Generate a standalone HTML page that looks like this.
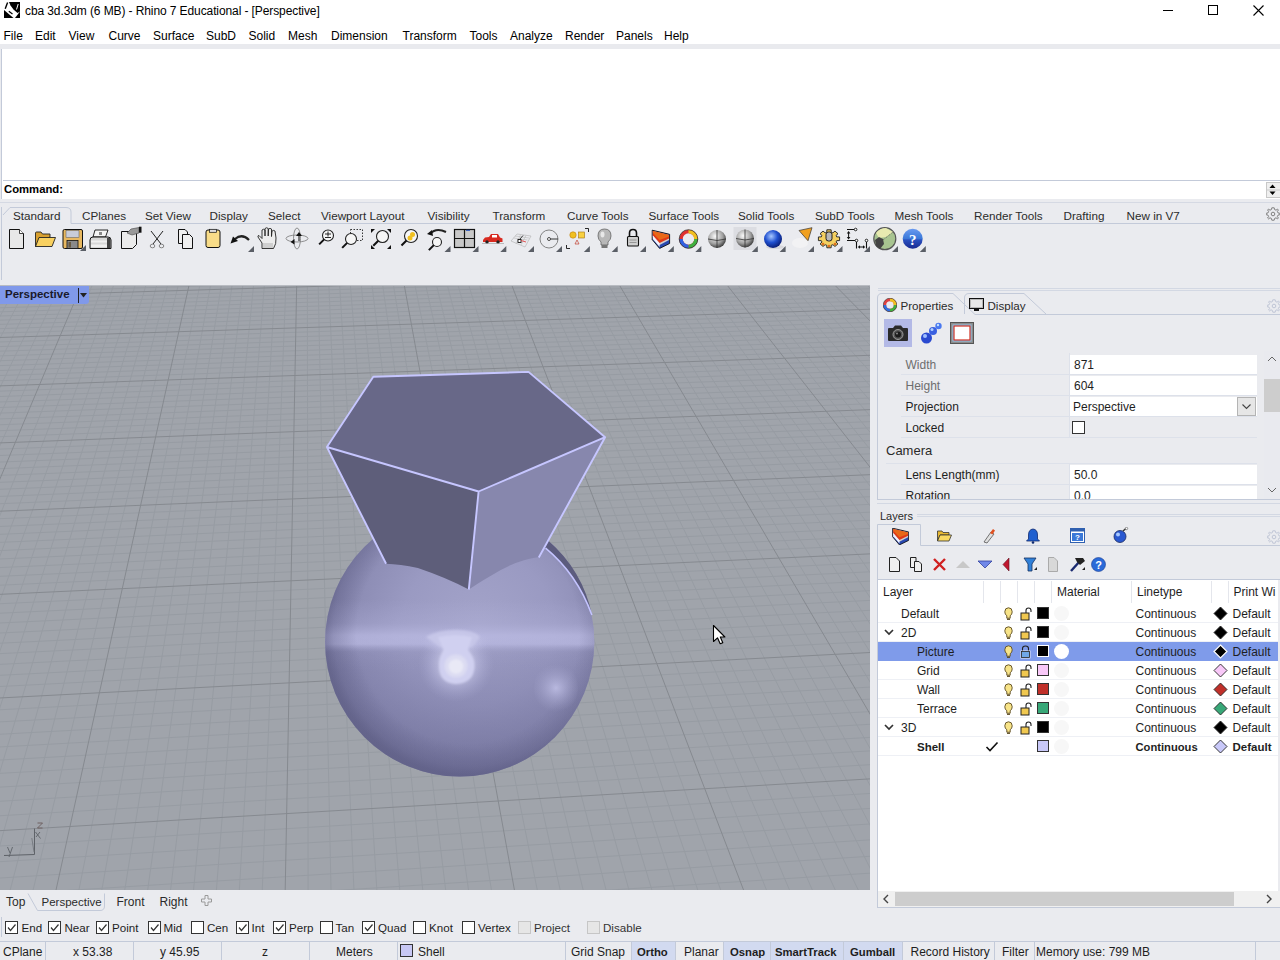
<!DOCTYPE html>
<html><head><meta charset="utf-8"><style>
html,body{margin:0;padding:0;}
body{width:1280px;height:960px;overflow:hidden;position:relative;background:#eaebef;font-family:"Liberation Sans",sans-serif;}
.abs{position:absolute;}
.t{position:absolute;white-space:nowrap;line-height:14px;font-size:12px;}
svg{display:block;}
</style></head><body>
<div class="abs" style="left:0;top:0;width:1280px;height:44px;background:#ffffff"></div><svg class="abs" style="left:4px;top:2px" width="16" height="16" viewBox="0 0 16 16">
<path d="M5 0 L16 0 L16 9.5 L13.5 11 L9.5 7.5 L6.5 3.5 Z" fill="#000"/>
<path d="M0 8 L9.5 16 L0 16 Z" fill="#000"/>
<path d="M16 9.5 L16 16 L11 16 Z" fill="#000"/>
<path d="M3.6 0.5 L1.2 6.8" stroke="#000" stroke-width="1.4"/>
<path d="M14.2 2 L12.5 7.5" stroke="#fff" stroke-width="1"/>
<path d="M4.8 9.3 L8.5 12" stroke="#000" stroke-width="1.2"/>
</svg><div class="t" style="left:25px;top:4px;font-size:12px;color:#000;letter-spacing:-0.1px">cba 3d.3dm (6 MB) - Rhino 7 Educational - [Perspective]</div><div class="abs" style="left:1163px;top:10px;width:10px;height:1px;background:#000"></div><div class="abs" style="left:1208px;top:5px;width:8px;height:8px;border:1px solid #000"></div><svg class="abs" style="left:1253px;top:5px" width="11" height="11" viewBox="0 0 11 11"><path d="M0.5 0.5L10.5 10.5M10.5 0.5L0.5 10.5" stroke="#000" stroke-width="1.1"/></svg><div class="t" style="left:3.5px;top:29px;font-size:12px;color:#000;">File</div><div class="t" style="left:35px;top:29px;font-size:12px;color:#000;">Edit</div><div class="t" style="left:68.5px;top:29px;font-size:12px;color:#000;">View</div><div class="t" style="left:108.5px;top:29px;font-size:12px;color:#000;">Curve</div><div class="t" style="left:153px;top:29px;font-size:12px;color:#000;">Surface</div><div class="t" style="left:206px;top:29px;font-size:12px;color:#000;">SubD</div><div class="t" style="left:248.5px;top:29px;font-size:12px;color:#000;">Solid</div><div class="t" style="left:288px;top:29px;font-size:12px;color:#000;">Mesh</div><div class="t" style="left:331px;top:29px;font-size:12px;color:#000;">Dimension</div><div class="t" style="left:402.5px;top:29px;font-size:12px;color:#000;">Transform</div><div class="t" style="left:469.5px;top:29px;font-size:12px;color:#000;">Tools</div><div class="t" style="left:510px;top:29px;font-size:12px;color:#000;">Analyze</div><div class="t" style="left:565px;top:29px;font-size:12px;color:#000;">Render</div><div class="t" style="left:616px;top:29px;font-size:12px;color:#000;">Panels</div><div class="t" style="left:664px;top:29px;font-size:12px;color:#000;">Help</div><div class="abs" style="left:0;top:44px;width:1280px;height:5px;background:#e9eaee"></div><div class="abs" style="left:1px;top:49px;width:1279px;height:150px;background:#fff;border-left:1px solid #c3cad9"></div><div class="abs" style="left:3px;top:180px;width:1277px;height:1px;background:#c3cad9"></div><div class="t" style="left:4px;top:181.5px;font-size:12px;font-weight:bold;color:#000;font-size:11.3px">Command:</div><svg class="abs" style="left:1266px;top:182px" width="14" height="16" viewBox="0 0 14 16">
<rect x="0" y="0" width="14" height="16" fill="#c8c8c8"/>
<rect x="1" y="1" width="13" height="6.5" fill="#efefef"/>
<rect x="1" y="8.5" width="13" height="6.5" fill="#efefef"/>
<path d="M3.5 6L6.5 2.5L9.5 6Z" fill="#000"/>
<path d="M3.5 9.5L6.5 13L9.5 9.5Z" fill="#000"/>
</svg><div class="abs" style="left:0;top:199px;width:1280px;height:87px;background:#eaebef"></div><div class="abs" style="left:0;top:202px;width:1280px;height:1px;background:#d5d9e3"></div><div class="abs" style="left:1px;top:207px;width:1px;height:73px;background:#c3cad9"></div><svg class="abs" style="left:0;top:205px" width="1280" height="20" viewBox="0 0 1280 20">
<path d="M3 10 L10 2.5 L66 2.5 Q71 2.5 71 7 L71 18.5 L1280 18.5" stroke="#c3cad9" fill="none" stroke-width="1"/>
</svg><div class="t" style="left:13px;top:209px;font-size:12px;color:#2b2b2b;font-size:11.7px">Standard</div><div class="t" style="left:82px;top:209px;font-size:12px;color:#2b2b2b;font-size:11.7px">CPlanes</div><div class="t" style="left:145px;top:209px;font-size:12px;color:#2b2b2b;font-size:11.7px">Set View</div><div class="t" style="left:209.5px;top:209px;font-size:12px;color:#2b2b2b;font-size:11.7px">Display</div><div class="t" style="left:268px;top:209px;font-size:12px;color:#2b2b2b;font-size:11.7px">Select</div><div class="t" style="left:321px;top:209px;font-size:12px;color:#2b2b2b;font-size:11.7px">Viewport Layout</div><div class="t" style="left:427.5px;top:209px;font-size:12px;color:#2b2b2b;font-size:11.7px">Visibility</div><div class="t" style="left:492.5px;top:209px;font-size:12px;color:#2b2b2b;font-size:11.7px">Transform</div><div class="t" style="left:567px;top:209px;font-size:12px;color:#2b2b2b;font-size:11.7px">Curve Tools</div><div class="t" style="left:648.5px;top:209px;font-size:12px;color:#2b2b2b;font-size:11.7px">Surface Tools</div><div class="t" style="left:738px;top:209px;font-size:12px;color:#2b2b2b;font-size:11.7px">Solid Tools</div><div class="t" style="left:815px;top:209px;font-size:12px;color:#2b2b2b;font-size:11.7px">SubD Tools</div><div class="t" style="left:894.5px;top:209px;font-size:12px;color:#2b2b2b;font-size:11.7px">Mesh Tools</div><div class="t" style="left:974px;top:209px;font-size:12px;color:#2b2b2b;font-size:11.7px">Render Tools</div><div class="t" style="left:1063.5px;top:209px;font-size:12px;color:#2b2b2b;font-size:11.7px">Drafting</div><div class="t" style="left:1126.5px;top:209px;font-size:12px;color:#2b2b2b;font-size:11.7px">New in V7</div><svg class="abs" style="left:1266px;top:207px" width="14" height="14" viewBox="0 0 14 14">
<path d="M7 0.8 L8.2 0.8 L8.6 2.6 L10 3.2 L11.5 2.1 L12.4 3 L11.4 4.5 L12 5.9 L13.8 6.3 L13.8 7.7 L12 8.1 L11.4 9.5 L12.4 11 L11.5 11.9 L10 10.8 L8.6 11.4 L8.2 13.2 L5.8 13.2 L5.4 11.4 L4 10.8 L2.5 11.9 L1.6 11 L2.6 9.5 L2 8.1 L0.2 7.7 L0.2 6.3 L2 5.9 L2.6 4.5 L1.6 3 L2.5 2.1 L4 3.2 L5.4 2.6 L5.8 0.8Z" fill="none" stroke="#808080" stroke-width="1"/>
<circle cx="7" cy="7" r="1.8" fill="none" stroke="#808080" stroke-width="1"/>
</svg><svg class="abs" style="left:0;top:224px" width="935" height="32" viewBox="0 224 935 32"><path d="M9.5 229.5 L19.5 229.5 L23.5 233.5 L23.5 248.5 L9.5 248.5Z" fill="#e8e8e8" stroke="#111" stroke-width="1"/><path d="M19.5 229.5 L19.5 233.5 L23.5 233.5" fill="#fff" stroke="#111" stroke-width="0.8"/><path d="M35.5 246.5 L35.5 233 Q35.5 232 36.5 232 L41 232 L42.5 234 L50 234 L50 237 Z" fill="#d8a030" stroke="#222" stroke-width="0.9"/><path d="M35.5 246.5 L39 237.5 L55.5 237.5 L52 246.5Z" fill="#f8d060" stroke="#222" stroke-width="0.9"/><rect x="63" y="229.5" width="19.5" height="19" rx="1.5" fill="#e8b860" stroke="#111" stroke-width="1"/><rect x="66" y="230.5" width="13" height="7" fill="#c8ccd8" stroke="#555" stroke-width="0.5"/><rect x="67" y="240.5" width="11" height="8" fill="#8a8a8a" stroke="#111" stroke-width="0.8"/><rect x="68.5" y="242" width="2.5" height="5.5" fill="#6a5a40"/><path d="M80 251 L86 245 L86 251Z" fill="#5a5e66"/><path d="M93 237 L95 230 L108 230 L105.5 237Z" fill="#f4f4f4" stroke="#111" stroke-width="0.9"/><rect x="99" y="232" width="3" height="3" fill="#888"/><path d="M90 240 Q90 237 93 237 L108 237 Q111 237 111 240 L111 248.5 L90 248.5Z" fill="#d8d8d8" stroke="#111" stroke-width="1"/><rect x="91" y="240.5" width="16" height="2" fill="#f0f0f0"/><rect x="91" y="244.5" width="16" height="2.5" fill="#f0f0f0"/><rect x="107" y="238" width="3.5" height="10" fill="#444"/><path d="M121.5 231.5 L136.5 231.5 L136.5 244.5 L132.5 248.5 L121.5 248.5Z" fill="#ebebeb" stroke="#111" stroke-width="1"/><path d="M127 233 L131 229 L139 227.5 L139 233 L132 235Z" fill="#999" stroke="#444" stroke-width="0.6"/><rect x="139" y="226.7" width="2.5" height="6" fill="#111"/><path d="M151 231 L161 244 M163 231 L153 244" stroke="#222" stroke-width="1"/><ellipse cx="152.5" cy="246" rx="2.3" ry="1.8" fill="none" stroke="#777" stroke-width="0.9"/><ellipse cx="161.5" cy="246" rx="2.3" ry="1.8" fill="none" stroke="#777" stroke-width="0.9"/><path d="M178.5 229.5 L185 229.5 L187.5 232 L187.5 243.5 L178.5 243.5Z" fill="#f0f0f0" stroke="#111" stroke-width="1"/><path d="M182.5 234.5 L189.5 234.5 L192.5 237.5 L192.5 248.5 L182.5 248.5Z" fill="#f0f0f0" stroke="#111" stroke-width="1"/><rect x="206" y="230" width="14" height="17.5" rx="2" fill="#f8dc88" stroke="#111" stroke-width="1"/><rect x="209.5" y="229.3" width="7" height="3" fill="#ddd" stroke="#111" stroke-width="0.7"/><path d="M235 239 Q242 233 249 240" stroke="#222" stroke-width="2.2" fill="none"/><path d="M230.5 243.5 L233 236.5 L238 241Z" fill="#111"/><path d="M248 252 L254 246 L254 252Z" fill="#5a5e66"/><path d="M262 248.5 L262 243 L258 237 Q257.5 235.5 259 235.5 L262 238.5 L262 230 Q263.5 228.5 265 230 L265 236 L265 228.5 Q266.7 227 268.2 228.5 L268.2 236 L268.5 229 Q270 227.8 271.5 229 L271.5 236.5 L272 231 Q273.5 229.8 275 231 L276 238 Q276.5 244 273.5 248.5Z" fill="#ececec" stroke="#222" stroke-width="0.9"/><rect x="263" y="243" width="10" height="5" fill="#cfcfcf"/><ellipse cx="297" cy="238.5" rx="11" ry="3.5" fill="none" stroke="#777" stroke-width="0.8"/><ellipse cx="297" cy="238.5" rx="3.5" ry="10.5" fill="none" stroke="#777" stroke-width="0.8"/><path d="M299 232 L302 236 L296 236Z M294.5 239 L294.5 244.5 L290.5 242Z" fill="#111"/><path d="M299 236 L299 241" stroke="#111"/><circle cx="328" cy="235.5" r="5.5" fill="#f6f6f6" stroke="#222" stroke-width="1.1"/><path d="M324.15 239.35 L319.15 244.35" stroke="#111" stroke-width="2"/><path d="M325 234 L331 234 M328 231.5 L328 236.5 M325 237.5 L331 237.5" stroke="#111" stroke-width="0.9"/><rect x="350.5" y="229.5" width="12" height="11" fill="none" stroke="#222" stroke-width="0.9" stroke-dasharray="1.5 1.5"/><circle cx="351" cy="239" r="5.5" fill="#f6f6f6" stroke="#222" stroke-width="1.1"/><path d="M347.15 242.85 L342.15 247.85" stroke="#111" stroke-width="2"/><path d="M371 229 L375 229 L371 233Z M391 229 L387 229 L391 233Z M371 249 L375 249 L371 245Z M391 249 L387 249 L391 245Z" fill="#111"/><circle cx="382.5" cy="236.5" r="6" fill="#f6f6f6" stroke="#222" stroke-width="1.1"/><path d="M378.3 240.7 L373.3 245.7" stroke="#111" stroke-width="2"/><circle cx="411" cy="236" r="6.5" fill="#f6f6f6" stroke="#222" stroke-width="1.1"/><path d="M406.45 240.55 L401.45 245.55" stroke="#111" stroke-width="2"/><circle cx="410" cy="238" r="2.5" fill="#f0c020"/><circle cx="412.5" cy="234.5" r="2.5" fill="#f0c020"/><path d="M430 234 Q436 227 446 232" stroke="#222" stroke-width="2" fill="none"/><path d="M427 234 L432 230 L433 236Z" fill="#111"/><circle cx="437" cy="242" r="4.5" fill="#f6f6f6" stroke="#222" stroke-width="1.1"/><path d="M433.85 245.15 L428.85 250.15" stroke="#111" stroke-width="2"/><path d="M444.5 252 L450.5 246 L450.5 252Z" fill="#5a5e66"/><rect x="454.5" y="229.5" width="20" height="18" fill="#c8c8c8" stroke="#111" stroke-width="1.2"/><path d="M464.5 229.5 L464.5 247.5 M454.5 238.5 L474.5 238.5" stroke="#111" stroke-width="1.2"/><path d="M466 230.3 L470 230.3" stroke="#2050c0"/><path d="M472.5 252 L478.5 246 L478.5 252Z" fill="#5a5e66"/><path d="M483 240 L485 237.5 L489 237 L491 234 L498 234 L500 237.5 L502.5 238.5 L502.5 242 L483 242Z" fill="#d82a20"/><rect x="492" y="235" width="5" height="2.5" fill="#fff"/><circle cx="487" cy="242" r="1.7" fill="#222"/><circle cx="498" cy="242" r="1.7" fill="#222"/><path d="M482 243.5 L504 243.5" stroke="#999" stroke-width="0.6"/><path d="M500.3 252 L506.3 246 L506.3 252Z" fill="#5a5e66"/><path d="M511 241 L517 234 L531 236 L525 247Z" fill="none" stroke="#b0b0b0" stroke-width="0.6"/><path d="M513.5 238 L527.5 240 M515 236 L529 238 M516 244 L520.5 235 M521 245 L526 235.5" stroke="#b8b8b8" stroke-width="0.6"/><rect x="518" y="239.5" width="3" height="3" fill="#fff" stroke="#111" stroke-width="0.9"/><path d="M521 240.5 L526 242" stroke="#e03030" stroke-width="0.8"/><path d="M520 239 L523 235.5" stroke="#111" stroke-width="0.8"/><path d="M528 252 L534 246 L534 252Z" fill="#5a5e66"/><circle cx="549" cy="239" r="9" fill="none" stroke="#777" stroke-width="0.9"/><circle cx="549" cy="239" r="1.5" fill="#fff" stroke="#222" stroke-width="0.8"/><path d="M550.5 239 L558 239" stroke="#222" stroke-width="0.9"/><path d="M556 252 L562 246 L562 252Z" fill="#5a5e66"/><circle cx="573" cy="235" r="3.2" fill="#f0c020" stroke="#c08010" stroke-width="0.6"/><rect x="578.5" y="232" width="6" height="6" fill="#f8d040" stroke="#a07010" stroke-width="0.6"/><path d="M575 244 L577 240 L579 244Z" fill="none" stroke="#c04030" stroke-width="0.7"/><path d="M566.5 245 L566.5 248.5 L570 248.5 M585 228.5 L588.5 228.5 L588.5 232" stroke="#111" stroke-width="0.9" fill="none"/><path d="M583.9 252 L589.9 246 L589.9 252Z" fill="#5a5e66"/><path d="M604.5 229 Q598 229 598 236 Q598 239.5 601 242 L601 245 L608 245 L608 242 Q611 239.5 611 236 Q611 229 604.5 229Z" fill="#b8b8b8" stroke="#555" stroke-width="0.7"/><ellipse cx="602.5" cy="234.5" rx="2" ry="3" fill="#e8e8e8"/><rect x="601.5" y="245" width="6" height="3" fill="#777"/><path d="M611.7 252 L617.7 246 L617.7 252Z" fill="#5a5e66"/><path d="M629.5 237 L629.5 233 Q629.5 229.5 633 229.5 Q636.5 229.5 636.5 233 L636.5 237" stroke="#111" stroke-width="1.6" fill="none"/><rect x="627.5" y="236.5" width="11" height="9.5" rx="1" fill="#cfcfcf" stroke="#111" stroke-width="1.1"/><path d="M629.5 240 L636.5 240 M629.5 242.5 L636.5 242.5" stroke="#888" stroke-width="0.8"/><path d="M640 252 L646 246 L646 252Z" fill="#5a5e66"/><path d="M652.2 230.2 L669.6 234.3 L669.6 243.5 L659.6 248.4 L652.2 239.6Z" fill="#2848b0" stroke="#111" stroke-width="0.9"/><path d="M652.8 231 L669 235 L669 240 L659.6 245 L652.8 237Z" fill="#d0d0d0"/><path d="M652.8 231 L669 235 L669 238.5 L659.6 243 L652.8 235.5Z" fill="#e03818"/><path d="M652.8 231 L669 235 L669 236.5 L659.6 240 L653 233Z" fill="#e86818"/><path d="M652.8 235.5 L659.6 243.5 L659.6 247 L652.8 239Z" fill="#f4f4ff"/><path d="M667.8 252 L673.8 246 L673.8 252Z" fill="#5a5e66"/><circle cx="688.5" cy="239" r="7.5" fill="none" stroke="#e03030" stroke-width="3.5"/><path d="M688.5 231.5 A7.5 7.5 0 0 1 696 239" stroke="#f0c020" stroke-width="3.5" fill="none"/><path d="M696 239 A7.5 7.5 0 0 1 688.5 246.5" stroke="#40b040" stroke-width="3.5" fill="none"/><path d="M688.5 246.5 A7.5 7.5 0 0 1 681 239" stroke="#3060e0" stroke-width="3.5" fill="none"/><circle cx="688.5" cy="239" r="9.3" fill="none" stroke="#222" stroke-width="0.7"/><path d="M695.3 252 L701.3 246 L701.3 252Z" fill="#5a5e66"/><defs><radialGradient id="gs" cx="0.4" cy="0.35" r="0.7"><stop offset="0" stop-color="#fafafa"/><stop offset="0.6" stop-color="#a0a0a0"/><stop offset="1" stop-color="#303030"/></radialGradient><radialGradient id="bs" cx="0.4" cy="0.35" r="0.7"><stop offset="0" stop-color="#a8c8ff"/><stop offset="0.5" stop-color="#2050d0"/><stop offset="1" stop-color="#08186a"/></radialGradient><radialGradient id="gh" cx="0.45" cy="0.4" r="0.6"><stop offset="0" stop-color="#e0e8c0"/><stop offset="0.7" stop-color="#90a070"/><stop offset="1" stop-color="#404040"/></radialGradient></defs><circle cx="717" cy="239" r="9" fill="url(#gs)"/><path d="M717 230 L717 248 M708 239 Q717 242 726 239" stroke="#333" stroke-width="0.8" fill="none"/><rect x="733.5" y="227" width="23" height="23" fill="#dcdde2"/><circle cx="745" cy="238.5" r="9" fill="url(#gs)"/><path d="M745 229.5 L745 247.5 M736 238.5 Q745 241.5 754 238.5" stroke="#333" stroke-width="0.8" fill="none"/><path d="M751.8 252 L757.8 246 L757.8 252Z" fill="#5a5e66"/><ellipse cx="775" cy="247" rx="9" ry="2" fill="#d8d8dc"/><circle cx="773" cy="239" r="9" fill="url(#bs)"/><path d="M779.6 252 L785.6 246 L785.6 252Z" fill="#5a5e66"/><ellipse cx="800" cy="243" rx="8" ry="5" fill="#f2f2f4"/><path d="M799 230.5 L812 227.7 L808 240.7Z" fill="#f0a020" stroke="#333" stroke-width="0.7"/><path d="M808 252 L814 246 L814 252Z" fill="#5a5e66"/><g transform="translate(0 35.8) scale(1 0.85)"><path d="M836.69 236.59 L839.58 236.65 L839.58 240.95 L836.69 241.01 L836.00 242.67 L838.00 244.77 L834.97 247.80 L832.87 245.80 L831.21 246.49 L831.15 249.38 L826.85 249.38 L826.79 246.49 L825.13 245.80 L823.03 247.80 L820.00 244.77 L822.00 242.67 L821.31 241.01 L818.42 240.95 L818.42 236.65 L821.31 236.59 L822.00 234.93 L820.00 232.83 L823.03 229.80 L825.13 231.80 L826.79 231.11 L826.85 228.22 L831.15 228.22 L831.21 231.11 L832.87 231.80 L834.97 229.80 L838.00 232.83 L836.00 234.93Z" fill="#f4d060" stroke="#222" stroke-width="1"/></g><circle cx="823" cy="244" r="1.3" fill="#e07020"/><circle cx="835" cy="244" r="1.3" fill="#e07020"/><circle cx="829" cy="246" r="1.3" fill="#e07020"/><rect x="826" y="232" width="6" height="9" rx="2.5" fill="#b8b8b8" stroke="#111" stroke-width="0.9"/><path d="M836.5 252 L842.5 246 L842.5 252Z" fill="#5a5e66"/><path d="M847 229.5 L854.3 229.5 M847 240.5 L855.2 240.5 M856.5 242 L856.5 248.5 M866.5 242 L866.5 248.5" stroke="#111" stroke-width="1.1" fill="none"/><circle cx="855.6" cy="229.5" r="1.3" fill="#fff" stroke="#111" stroke-width="0.9"/><circle cx="856.5" cy="240.5" r="1.3" fill="#fff" stroke="#111" stroke-width="0.9"/><circle cx="866.5" cy="240.5" r="1.3" fill="#fff" stroke="#111" stroke-width="0.9"/><path d="M848.6 232.5 L848.6 238" stroke="#111" stroke-width="1"/><path d="M846.8 233.5 L848.6 231 L850.4 233.5Z M846.8 237 L848.6 239.5 L850.4 237Z" fill="#111"/><path d="M859.5 247 L863.5 247" stroke="#111" stroke-width="1"/><path d="M860 245.3 L857.8 247 L860 248.7Z M863 245.3 L865.2 247 L863 248.7Z" fill="#111"/><path d="M864 252 L870 246 L870 252Z" fill="#5a5e66"/><circle cx="884.8" cy="238.7" r="11" fill="#a8c490" stroke="#555" stroke-width="1.2"/><path d="M876 233 Q880 228 886 228 L893 232 L886 237 L879 238Z" fill="#e8eab0"/><path d="M875 240 L879 237 L883 239 L884 244 L880 249 L876 246Z" fill="#444"/><path d="M883 240 L893 232" stroke="#555" stroke-width="0.8" stroke-dasharray="1 1"/><path d="M892 252 L898 246 L898 252Z" fill="#5a5e66"/><defs><linearGradient id="hp" x1="0" y1="0" x2="0" y2="1"><stop offset="0" stop-color="#6a9af0"/><stop offset="0.5" stop-color="#3a78d8"/><stop offset="0.56" stop-color="#2a50c0"/><stop offset="1" stop-color="#1a2a90"/></linearGradient></defs><circle cx="912.7" cy="238.7" r="10" fill="url(#hp)"/><text x="912.7" y="244.5" font-size="15" font-weight="bold" fill="#fff" text-anchor="middle" font-family="Liberation Serif">?</text><path d="M919.8 252 L925.8 246 L925.8 252Z" fill="#5a5e66"/></svg><div class="abs" style="left:0;top:285px;width:870px;height:1px;background:#b9bcc2"></div><svg class="abs" style="left:0;top:286px" width="870" height="604" viewBox="0 0 870 604">
<rect width="870" height="604" fill="#a0a4ab"/>
<path d="M-79.0 -55.6L-961.5 1043.9M-69.1 -55.8L-927.6 1041.1M-59.3 -56.1L-893.8 1038.3M-49.4 -56.4L-860.1 1035.5M-39.6 -56.6L-826.5 1032.7M-29.8 -56.9L-793.0 1030.0M-20.0 -57.1L-759.7 1027.2M-10.2 -57.4L-726.4 1024.5M-0.4 -57.7L-693.3 1021.7M19.1 -58.2L-627.4 1016.3M28.9 -58.4L-594.7 1013.6M38.6 -58.7L-562.0 1010.9M48.4 -59.0L-529.5 1008.2M58.1 -59.2L-497.0 1005.5M67.8 -59.5L-464.7 1002.9M77.5 -59.7L-432.5 1000.2M87.2 -60.0L-400.4 997.5M96.9 -60.2L-368.4 994.9M116.2 -60.8L-304.8 989.7M125.9 -61.0L-273.1 987.0M135.5 -61.3L-241.6 984.4M145.1 -61.5L-210.1 981.8M154.8 -61.8L-178.8 979.3M164.4 -62.0L-147.6 976.7M174.0 -62.3L-116.4 974.1M183.6 -62.5L-85.4 971.5M193.1 -62.8L-54.5 969.0M212.3 -63.3L7.0 963.9M221.8 -63.5L37.6 961.4M231.4 -63.8L68.1 958.9M240.9 -64.1L98.5 956.4M250.4 -64.3L128.8 953.9M259.9 -64.6L159.0 951.4M269.4 -64.8L189.1 948.9M278.9 -65.1L219.1 946.4M288.4 -65.3L249.0 943.9M307.3 -65.8L308.5 939.0M316.8 -66.1L338.1 936.6M326.2 -66.3L367.6 934.2M335.6 -66.6L397.0 931.7M345.0 -66.8L426.3 929.3M354.5 -67.1L455.6 926.9M363.9 -67.3L484.7 924.5M373.2 -67.6L513.7 922.1M382.6 -67.8L542.6 919.7M401.3 -68.3L600.2 915.0M410.7 -68.5L628.8 912.6M420.0 -68.8L657.4 910.2M429.4 -69.0L685.9 907.9M438.7 -69.3L714.2 905.5M448.0 -69.5L742.5 903.2M457.3 -69.8L770.7 900.9M466.6 -70.0L798.8 898.6M475.9 -70.3L826.8 896.3M494.4 -70.8L882.5 891.7M503.7 -71.0L910.3 889.4M512.9 -71.3L937.9 887.1M522.1 -71.5L965.5 884.8M531.4 -71.7L993.0 882.5M540.6 -72.0L1020.3 880.3M549.8 -72.2L1047.6 878.0M559.0 -72.5L1074.8 875.8M568.2 -72.7L1102.0 873.5M586.5 -73.2L1156.0 869.1M595.7 -73.4L1182.8 866.9M604.8 -73.7L1209.6 864.7M613.9 -73.9L1236.3 862.5M623.1 -74.2L1262.9 860.3M632.2 -74.4L1289.5 858.1M641.3 -74.6L1315.9 855.9M650.4 -74.9L1342.3 853.7M659.5 -75.1L1368.6 851.5M677.6 -75.6L1420.9 847.2M686.7 -75.9L1447.0 845.1M695.7 -76.1L1472.9 842.9M704.8 -76.3L1498.8 840.8M713.8 -76.6L1524.6 838.7M722.9 -76.8L1550.3 836.5M731.9 -77.0L1576.0 834.4M740.9 -77.3L1601.5 832.3M749.9 -77.5L1627.0 830.2M767.8 -78.0L1677.8 826.0M776.8 -78.2L1703.0 823.9M785.8 -78.5L1728.2 821.9M794.7 -78.7L1753.3 819.8M803.7 -78.9L1778.3 817.7M812.6 -79.2L1803.3 815.7M821.5 -79.4L1828.1 813.6M830.4 -79.7L1852.9 811.6M839.3 -79.9L1877.7 809.5M857.1 -80.4L1926.9 805.5M866.0 -80.6L1951.4 803.4M874.9 -80.8L1975.8 801.4M883.7 -81.1L2000.2 799.4M892.6 -81.3L2024.4 797.4M901.4 -81.5L2048.7 795.4M910.2 -81.8L2072.8 793.4M919.1 -82.0L2096.9 791.4M927.9 -82.2L2120.8 789.4M-91.4 -52.3L940.5 -79.7M-93.9 -49.2L944.3 -77.0M-96.5 -46.0L948.2 -74.2M-99.1 -42.8L952.1 -71.4M-101.8 -39.6L956.1 -68.5M-104.5 -36.3L960.1 -65.6M-107.2 -33.0L964.2 -62.7M-109.9 -29.7L968.3 -59.7M-112.7 -26.3L972.5 -56.7M-118.5 -19.3L981.0 -50.6M-121.4 -15.8L985.3 -47.4M-124.3 -12.2L989.7 -44.3M-127.3 -8.6L994.2 -41.1M-130.3 -4.9L998.7 -37.8M-133.4 -1.2L1003.3 -34.5M-136.5 2.6L1007.9 -31.2M-139.7 6.5L1012.6 -27.8M-142.9 10.4L1017.4 -24.4M-149.5 18.4L1027.1 -17.4M-152.8 22.5L1032.0 -13.8M-156.3 26.6L1037.1 -10.2M-159.7 30.8L1042.2 -6.5M-163.2 35.1L1047.3 -2.8M-166.8 39.4L1052.6 1.0M-170.4 43.8L1057.9 4.8M-174.1 48.2L1063.3 8.7M-177.8 52.8L1068.7 12.6M-185.4 62.0L1079.9 20.7M-189.3 66.8L1085.6 24.8M-193.3 71.6L1091.4 28.9M-197.3 76.5L1097.3 33.2M-201.4 81.5L1103.3 37.5M-205.6 86.6L1109.3 41.9M-209.8 91.7L1115.5 46.3M-214.1 96.9L1121.7 50.8M-218.5 102.3L1128.1 55.4M-227.5 113.2L1141.1 64.7M-232.1 118.8L1147.7 69.5M-236.8 124.5L1154.5 74.4M-241.5 130.3L1161.4 79.3M-246.4 136.1L1168.4 84.4M-251.3 142.2L1175.5 89.5M-256.4 148.3L1182.7 94.7M-261.5 154.5L1190.0 100.0M-266.7 160.8L1197.5 105.3M-277.4 173.8L1212.8 116.4M-282.9 180.5L1220.7 122.0M-288.5 187.4L1228.6 127.8M-294.3 194.3L1236.8 133.6M-300.1 201.4L1245.1 139.6M-306.1 208.7L1253.5 145.7M-312.1 216.0L1262.1 151.8M-318.3 223.5L1270.8 158.1M-324.6 231.2L1279.7 164.5M-337.6 247.0L1298.0 177.7M-344.4 255.2L1307.4 184.5M-351.2 263.5L1317.0 191.4M-358.2 272.0L1326.8 198.4M-365.4 280.7L1336.7 205.6M-372.7 289.6L1346.9 212.9M-380.1 298.7L1357.2 220.4M-387.8 308.0L1367.8 228.0M-395.6 317.4L1378.6 235.8M-411.7 337.1L1400.9 251.8M-420.1 347.2L1412.3 260.0M-428.6 357.6L1424.0 268.5M-437.4 368.3L1436.0 277.1M-446.4 379.2L1448.2 285.9M-455.5 390.3L1460.7 294.9M-465.0 401.8L1473.5 304.1M-474.6 413.5L1486.6 313.5M-484.5 425.5L1499.9 323.1M-505.0 450.5L1527.5 343.0M-515.7 463.5L1541.8 353.3M-526.7 476.8L1556.5 363.9M-538.0 490.5L1571.5 374.6M-549.5 504.6L1586.8 385.7M-561.4 519.0L1602.6 397.0M-573.7 533.9L1618.7 408.6M-586.2 549.2L1635.2 420.6M-599.2 564.9L1652.2 432.8M-626.2 597.8L1687.4 458.1M-640.4 614.9L1705.7 471.3M-654.9 632.7L1724.6 484.9M-670.0 650.9L1743.9 498.8M-685.5 669.8L1763.7 513.1M-701.5 689.2L1784.2 527.8M-718.0 709.3L1805.2 542.9M-735.1 730.1L1826.8 558.5M-752.8 751.5L1849.0 574.5M-789.9 796.7L1895.5 608.0M-809.5 820.5L1919.8 625.5M-829.8 845.2L1944.9 643.5M-850.9 870.8L1970.7 662.1M-872.7 897.3L1997.4 681.3M-895.4 924.9L2024.9 701.2M-919.0 953.5L2053.4 721.7M-943.5 983.3L2082.8 742.9M-969.0 1014.4L2113.3 764.8" stroke="#979ca3" stroke-width="1" fill="none"/><path d="M-88.8 -55.3L-995.6 1046.7M9.4 -57.9L-660.3 1019.0M106.6 -60.5L-336.5 992.3M202.7 -63.0L-23.7 966.5M297.9 -65.6L278.8 941.5M392.0 -68.1L571.5 917.3M485.1 -70.5L854.7 894.0M577.3 -73.0L1129.0 871.3M668.6 -75.4L1394.8 849.4M758.9 -77.8L1652.4 828.1M848.2 -80.1L1902.3 807.5M936.7 -82.5L2144.8 787.5M-88.8 -55.3L936.7 -82.5M-115.6 -22.8L976.7 -53.6M-146.2 14.4L1022.2 -20.9M-181.6 57.4L1074.3 16.6M-223.0 107.7L1134.5 60.0M-272.0 167.3L1205.1 110.8M-331.1 239.1L1288.8 171.1M-403.6 327.1L1389.6 243.7M-494.6 437.8L1513.6 332.9M-612.5 581.1L1669.6 445.3M-771.0 773.7L1871.9 591.0M-995.6 1046.7L2144.8 787.5" stroke="#868a90" stroke-width="1" fill="none"/>
</svg><svg class="abs" style="left:0;top:286px" width="870" height="604" viewBox="0 286 870 604">
<defs>
<radialGradient id="sph" gradientUnits="userSpaceOnUse" cx="478" cy="628" r="170">
<stop offset="0" stop-color="#a4a4ca"/>
<stop offset="0.45" stop-color="#9a9ac2"/>
<stop offset="0.7" stop-color="#8e8eb6"/>
<stop offset="0.85" stop-color="#8080a8"/>
<stop offset="1" stop-color="#6c6c92"/>
</radialGradient>
<linearGradient id="band" gradientUnits="userSpaceOnUse" x1="0" y1="600" x2="0" y2="670">
<stop offset="0" stop-color="#b4b4dc" stop-opacity="0"/>
<stop offset="0.33" stop-color="#b4b4dc" stop-opacity="0.3"/>
<stop offset="0.5" stop-color="#bcbce4" stop-opacity="0.7"/>
<stop offset="0.63" stop-color="#bcbce4" stop-opacity="0.78"/>
<stop offset="0.74" stop-color="#b0b0d8" stop-opacity="0.15"/>
<stop offset="1" stop-color="#a0a0c8" stop-opacity="0"/>
</linearGradient>
<linearGradient id="lower" gradientUnits="userSpaceOnUse" x1="0" y1="638" x2="0" y2="777">
<stop offset="0" stop-color="#6a6a94" stop-opacity="0"/>
<stop offset="0.12" stop-color="#6a6a94" stop-opacity="0.14"/>
<stop offset="1" stop-color="#5e5e88" stop-opacity="0.45"/>
</linearGradient>
<radialGradient id="edge" gradientUnits="userSpaceOnUse" cx="467.7" cy="632.0" r="142.6">
<stop offset="0.78" stop-color="#5a5a80" stop-opacity="0"/>
<stop offset="0.94" stop-color="#5a5a80" stop-opacity="0.3"/>
<stop offset="1" stop-color="#5a5a80" stop-opacity="0.55"/>
</radialGradient>
<radialGradient id="hl" cx="0.5" cy="0.5" r="0.5">
<stop offset="0" stop-color="#ffffff" stop-opacity="0.95"/>
<stop offset="0.3" stop-color="#e0e0f8" stop-opacity="0.8"/>
<stop offset="0.65" stop-color="#c8c8ec" stop-opacity="0.4"/>
<stop offset="1" stop-color="#b0b0d8" stop-opacity="0"/>
</radialGradient>
<radialGradient id="hl2" gradientUnits="userSpaceOnUse" cx="556" cy="688" r="24">
<stop offset="0" stop-color="#c8c8ee" stop-opacity="0.75"/>
<stop offset="1" stop-color="#a8a8d0" stop-opacity="0"/>
</radialGradient>
<radialGradient id="hlc" cx="0.5" cy="0.5" r="0.5">
<stop offset="0" stop-color="#f8f8ff" stop-opacity="1"/>
<stop offset="0.22" stop-color="#eeeeff" stop-opacity="1"/>
<stop offset="0.4" stop-color="#d6d6f4" stop-opacity="0.9"/>
<stop offset="0.7" stop-color="#c4c4e8" stop-opacity="0.5"/>
<stop offset="1" stop-color="#b4b4dc" stop-opacity="0"/>
</radialGradient>
<filter id="blr" x="-20%" y="-20%" width="140%" height="140%"><feGaussianBlur stdDeviation="0.9"/></filter>
<clipPath id="sc"><circle cx="459.7" cy="642.0" r="134.6"/></clipPath>
</defs>
<circle cx="459.7" cy="642.0" r="134.6" fill="url(#sph)"/>
<g clip-path="url(#sc)">
<rect x="320" y="590" width="280" height="90" fill="url(#band)"/>
<rect x="320" y="638" width="280" height="142" fill="url(#lower)"/>
<rect x="320" y="500" width="280" height="280" fill="url(#edge)"/>
<ellipse cx="455" cy="641" rx="38" ry="14" fill="url(#hl)" opacity="0.6"/><ellipse cx="456" cy="664" rx="38" ry="38" fill="url(#hl)" opacity="0.8"/>
<g filter="url(#blr)">
<path d="M426 637 Q438 630 456 630 Q474 630 480 637 L472 647 L441 647 Z" fill="#c6c6e8"/>
<path d="M438 637 Q456 633 472 637 L468 650 Q475 658 474.5 666 Q474 683 456 684 Q439 683 439 666 Q438.5 658 443.5 650 Z" fill="#d0d0f0"/>
<circle cx="456" cy="666" r="11.5" fill="#dcdcf2"/>
<circle cx="456" cy="666.5" r="7.3" fill="#e9e9f6"/>
</g>

<ellipse cx="556" cy="688" rx="22" ry="26" fill="url(#hl2)"/>
</g>
<path d="M544.5 547 Q577 574 592 615 A134.6 134.6 0 0 0 548 540.5 Z" fill="#5c5c7e"/>
<path d="M545.6 548.1 Q577 574 591.9 615" stroke="#c4c4ff" stroke-width="1.6" fill="none"/>
<path d="M326.9 447 L478.6 491.5 L468.8 589.6 Q447 578 417.9 568.1 Q400 564 386.1 563.7 Z" fill="#5e5e7a"/>
<path d="M478.6 491.5 L605.1 437.2 L539.5 557.1 Q515.8 560 491.3 575.4 Q478 583 468.8 589.6 Z" fill="#8787ad"/>
<path d="M373.3 376.7 L528.5 371.9 L605.1 437.2 L478.6 491.5 L326.9 447 Z" fill="#686888"/>
<path d="M373.3 376.7 L528.5 371.9 L605.1 437.2 L478.6 491.5 L326.9 447 Z M326.9 447 L386.1 563.7 M478.6 491.5 L468.8 589.6 M605.1 437.2 L538.8 557.5" stroke="#c6c6ff" stroke-width="1.9" fill="none" stroke-linejoin="round"/>
</svg><div class="abs" style="left:0;top:286px;width:89px;height:18px;background:#8099ea;border-radius:0 0 3px 0"></div><div class="t" style="left:5px;top:287px;font-size:12px;font-weight:bold;color:#1a1a2a;font-size:11.5px">Perspective</div><div class="abs" style="left:78px;top:288px;width:1px;height:15px;background:#222"></div><svg class="abs" style="left:80px;top:293px" width="8" height="5"><path d="M0 0L7 0L3.5 4.5Z" fill="#222"/></svg><svg class="abs" style="left:0;top:815px" width="50" height="45" viewBox="0 0 50 45">
<path d="M34.5 13.5 L34.5 39.5 L4 40.5" stroke="#5e6268" fill="none" stroke-width="1"/>
<path d="M31.8 23 L34 37" stroke="#6e7278" stroke-width="0.8"/>
<path d="M37.5 8 L42.5 8 L37.5 13 L42.5 13" stroke="#6a5a5a" stroke-width="0.9" fill="none"/>
<path d="M35.5 17 L40.5 23.5 M40 17 L36 22" stroke="#5e6268" stroke-width="0.9" fill="none"/>
<path d="M7.5 32 L10 38 M12.5 32 L9 42" stroke="#5e6268" stroke-width="0.9" fill="none"/>
</svg><svg class="abs" style="left:712px;top:624px" width="16" height="22" viewBox="0 0 16 22">
<path d="M1.5 1.5 L1.5 17.5 L5.5 13.8 L8.2 19.8 L10.8 18.7 L8.3 13 L12.9 13 Z" fill="#fff" stroke="#000" stroke-width="1.1" stroke-linejoin="round"/>
</svg><svg class="abs" style="left:0;top:890px" width="300" height="25" viewBox="0 0 300 25">
<path d="M28 3.5 L37.5 20.5 L100 20.5 Q104.5 20.5 104.5 16 L104.5 3.5" stroke="#c3cad9" fill="none" stroke-width="1"/>
</svg><div class="t" style="left:6px;top:894.5px;font-size:12px;color:#2b2b2b;">Top</div><div class="t" style="left:41.5px;top:894.5px;font-size:12px;color:#2b2b2b;font-size:11.5px">Perspective</div><div class="t" style="left:116.5px;top:894.5px;font-size:12px;color:#2b2b2b;">Front</div><div class="t" style="left:159.5px;top:894.5px;font-size:12px;color:#2b2b2b;">Right</div><svg class="abs" style="left:201px;top:895px" width="11" height="11" viewBox="0 0 11 11"><path d="M4 0.5H7V4H10.5V7H7V10.5H4V7H0.5V4H4Z" fill="none" stroke="#9a9a9a" stroke-width="1"/></svg><div class="abs" style="left:1px;top:917px;width:1px;height:20px;background:#c3cad9"></div><div class="abs" style="left:5px;top:921px;width:11px;height:11px;border:1px solid #333;background:#fff"></div><svg class="abs" style="left:6px;top:922px" width="11" height="11"><path d="M2 5.5 L4.5 8.5 L9.5 2.5" stroke="#333" stroke-width="1.2" fill="none"/></svg><div class="t" style="left:21.5px;top:920.75px;font-size:12px;color:#1e1e1e;font-size:11.6px">End</div><div class="abs" style="left:48px;top:921px;width:11px;height:11px;border:1px solid #333;background:#fff"></div><svg class="abs" style="left:49px;top:922px" width="11" height="11"><path d="M2 5.5 L4.5 8.5 L9.5 2.5" stroke="#333" stroke-width="1.2" fill="none"/></svg><div class="t" style="left:64.5px;top:920.75px;font-size:12px;color:#1e1e1e;font-size:11.6px">Near</div><div class="abs" style="left:96px;top:921px;width:11px;height:11px;border:1px solid #333;background:#fff"></div><svg class="abs" style="left:97px;top:922px" width="11" height="11"><path d="M2 5.5 L4.5 8.5 L9.5 2.5" stroke="#333" stroke-width="1.2" fill="none"/></svg><div class="t" style="left:112px;top:920.75px;font-size:12px;color:#1e1e1e;font-size:11.6px">Point</div><div class="abs" style="left:147.5px;top:921px;width:11px;height:11px;border:1px solid #333;background:#fff"></div><svg class="abs" style="left:148.5px;top:922px" width="11" height="11"><path d="M2 5.5 L4.5 8.5 L9.5 2.5" stroke="#333" stroke-width="1.2" fill="none"/></svg><div class="t" style="left:163.5px;top:920.75px;font-size:12px;color:#1e1e1e;font-size:11.6px">Mid</div><div class="abs" style="left:191px;top:921px;width:11px;height:11px;border:1px solid #333;background:#fff"></div><div class="t" style="left:207px;top:920.75px;font-size:12px;color:#1e1e1e;font-size:11.6px">Cen</div><div class="abs" style="left:235.5px;top:921px;width:11px;height:11px;border:1px solid #333;background:#fff"></div><svg class="abs" style="left:236.5px;top:922px" width="11" height="11"><path d="M2 5.5 L4.5 8.5 L9.5 2.5" stroke="#333" stroke-width="1.2" fill="none"/></svg><div class="t" style="left:251.5px;top:920.75px;font-size:12px;color:#1e1e1e;font-size:11.6px">Int</div><div class="abs" style="left:273px;top:921px;width:11px;height:11px;border:1px solid #333;background:#fff"></div><svg class="abs" style="left:274px;top:922px" width="11" height="11"><path d="M2 5.5 L4.5 8.5 L9.5 2.5" stroke="#333" stroke-width="1.2" fill="none"/></svg><div class="t" style="left:289px;top:920.75px;font-size:12px;color:#1e1e1e;font-size:11.6px">Perp</div><div class="abs" style="left:319.5px;top:921px;width:11px;height:11px;border:1px solid #333;background:#fff"></div><div class="t" style="left:335.5px;top:920.75px;font-size:12px;color:#1e1e1e;font-size:11.6px">Tan</div><div class="abs" style="left:362px;top:921px;width:11px;height:11px;border:1px solid #333;background:#fff"></div><svg class="abs" style="left:363px;top:922px" width="11" height="11"><path d="M2 5.5 L4.5 8.5 L9.5 2.5" stroke="#333" stroke-width="1.2" fill="none"/></svg><div class="t" style="left:378px;top:920.75px;font-size:12px;color:#1e1e1e;font-size:11.6px">Quad</div><div class="abs" style="left:413px;top:921px;width:11px;height:11px;border:1px solid #333;background:#fff"></div><div class="t" style="left:429px;top:920.75px;font-size:12px;color:#1e1e1e;font-size:11.6px">Knot</div><div class="abs" style="left:462px;top:921px;width:11px;height:11px;border:1px solid #333;background:#fff"></div><div class="t" style="left:478px;top:920.75px;font-size:12px;color:#1e1e1e;font-size:11.6px">Vertex</div><div class="abs" style="left:518px;top:921px;width:11px;height:11px;border:1px solid #c6c6c6;background:#e6e6e6"></div><div class="t" style="left:534px;top:920.75px;font-size:12px;color:#333;font-size:11.6px">Project</div><div class="abs" style="left:587px;top:921px;width:11px;height:11px;border:1px solid #c6c6c6;background:#e6e6e6"></div><div class="t" style="left:603px;top:920.75px;font-size:12px;color:#333;font-size:11.6px">Disable</div><div class="abs" style="left:0;top:941px;width:1280px;height:1px;background:#c3cad9"></div><div class="abs" style="left:631.5px;top:942px;width:44.0px;height:18px;background:#d2daf0"></div><div class="abs" style="left:724.0px;top:942px;width:46.0px;height:18px;background:#d2daf0"></div><div class="abs" style="left:770.5px;top:942px;width:73.0px;height:18px;background:#d2daf0"></div><div class="abs" style="left:844.0px;top:942px;width:58.5px;height:18px;background:#d2daf0"></div><div class="abs" style="left:45px;top:942px;width:1px;height:18px;background:#c3cad9"></div><div class="abs" style="left:133px;top:942px;width:1px;height:18px;background:#c3cad9"></div><div class="abs" style="left:221px;top:942px;width:1px;height:18px;background:#c3cad9"></div><div class="abs" style="left:309px;top:942px;width:1px;height:18px;background:#c3cad9"></div><div class="abs" style="left:397px;top:942px;width:1px;height:18px;background:#c3cad9"></div><div class="abs" style="left:565px;top:942px;width:1px;height:18px;background:#c3cad9"></div><div class="abs" style="left:631px;top:942px;width:1px;height:18px;background:#c3cad9"></div><div class="abs" style="left:675px;top:942px;width:1px;height:18px;background:#c3cad9"></div><div class="abs" style="left:723px;top:942px;width:1px;height:18px;background:#c3cad9"></div><div class="abs" style="left:770px;top:942px;width:1px;height:18px;background:#c3cad9"></div><div class="abs" style="left:843px;top:942px;width:1px;height:18px;background:#c3cad9"></div><div class="abs" style="left:902px;top:942px;width:1px;height:18px;background:#c3cad9"></div><div class="abs" style="left:994px;top:942px;width:1px;height:18px;background:#c3cad9"></div><div class="abs" style="left:1034px;top:942px;width:1px;height:18px;background:#c3cad9"></div><div class="abs" style="left:1255px;top:942px;width:1px;height:18px;background:#c3cad9"></div><div class="t" style="left:3px;top:944.5px;font-size:12px;color:#1e1e1e;">CPlane</div><div class="t" style="left:73px;top:944.5px;font-size:12px;color:#1e1e1e;">x 53.38</div><div class="t" style="left:160px;top:944.5px;font-size:12px;color:#1e1e1e;">y 45.95</div><div class="t" style="left:262px;top:944.5px;font-size:12px;color:#1e1e1e;">z</div><div class="t" style="left:336px;top:944.5px;font-size:12px;color:#1e1e1e;">Meters</div><div class="t" style="left:418px;top:944.5px;font-size:12px;color:#1e1e1e;">Shell</div><div class="t" style="left:571px;top:944.5px;font-size:12px;color:#1e1e1e;">Grid Snap</div><div class="t" style="left:637px;top:944.5px;font-size:12px;font-weight:bold;color:#1e1e1e;font-size:11.3px">Ortho</div><div class="t" style="left:684px;top:944.5px;font-size:12px;color:#1e1e1e;">Planar</div><div class="t" style="left:730px;top:944.5px;font-size:12px;font-weight:bold;color:#1e1e1e;font-size:11.3px">Osnap</div><div class="t" style="left:775px;top:944.5px;font-size:12px;font-weight:bold;color:#1e1e1e;font-size:11.3px">SmartTrack</div><div class="t" style="left:850px;top:944.5px;font-size:12px;font-weight:bold;color:#1e1e1e;font-size:11.3px">Gumball</div><div class="t" style="left:910.5px;top:944.5px;font-size:12px;color:#1e1e1e;">Record History</div><div class="t" style="left:1002px;top:944.5px;font-size:12px;color:#1e1e1e;">Filter</div><div class="t" style="left:1036px;top:944.5px;font-size:12px;color:#1e1e1e;">Memory use: 799 MB</div><div class="abs" style="left:400px;top:944px;width:13px;height:13px;border:1px solid #333;background:#c8c8f4;box-sizing:border-box"></div><div class="abs" style="left:878px;top:288px;width:402px;height:1px;background:#d3d8e3"></div><div class="abs" style="left:878px;top:290px;width:402px;height:1px;background:#d3d8e3"></div><svg class="abs" style="left:870px;top:290px" width="410" height="215" viewBox="870 290 410 215">
<path d="M964.5 314 L964.5 298 Q964.5 293.5 969 293.5 L1024 293.5 L1046 314" stroke="#c3cad9" fill="none"/>
<path d="M877.5 499 L877.5 298 Q877.5 293.5 882 293.5 L953 293.5 L975 314.5 L1280 314.5" stroke="#c3cad9" fill="none"/>
<path d="M877 499.5 L1280 499.5" stroke="#c3cad9"/>
<path d="M877 503.5 L1280 503.5" stroke="#d3d8e3"/>
</svg><svg class="abs" style="left:883px;top:298px" width="14" height="14" viewBox="0 0 14 14">
<circle cx="7" cy="7" r="5.3" fill="none" stroke="#e04040" stroke-width="3"/>
<path d="M7 1.7 A5.3 5.3 0 0 1 12.3 7" stroke="#f0c020" stroke-width="3" fill="none"/>
<path d="M12.3 7 A5.3 5.3 0 0 1 7 12.3" stroke="#40b040" stroke-width="3" fill="none"/>
<path d="M7 12.3 A5.3 5.3 0 0 1 1.7 7" stroke="#3070e0" stroke-width="3" fill="none"/>
<circle cx="7" cy="7" r="6.8" fill="none" stroke="#333" stroke-width="0.6"/>
</svg><div class="t" style="left:900.5px;top:299px;font-size:12px;color:#2a2a2a;font-size:11.6px">Properties</div><svg class="abs" style="left:969px;top:298px" width="15" height="14" viewBox="0 0 15 14">
<rect x="0.5" y="0.5" width="14" height="10" fill="#b8b8b8" stroke="#111"/>
<rect x="2" y="2" width="11" height="7" fill="#e8e8e8"/>
<rect x="5" y="11" width="5" height="2" fill="#111"/>
</svg><div class="t" style="left:987.5px;top:299px;font-size:12px;color:#2a2a2a;font-size:11.6px">Display</div><svg class="abs" style="left:1267px;top:299px" width="14" height="14" viewBox="0 0 14 14"><path d="M7 0.8 L8.2 0.8 L8.6 2.6 L10 3.2 L11.5 2.1 L12.4 3 L11.4 4.5 L12 5.9 L13.8 6.3 L13.8 7.7 L12 8.1 L11.4 9.5 L12.4 11 L11.5 11.9 L10 10.8 L8.6 11.4 L8.2 13.2 L5.8 13.2 L5.4 11.4 L4 10.8 L2.5 11.9 L1.6 11 L2.6 9.5 L2 8.1 L0.2 7.7 L0.2 6.3 L2 5.9 L2.6 4.5 L1.6 3 L2.5 2.1 L4 3.2 L5.4 2.6 L5.8 0.8Z" fill="none" stroke="#c0c6d6" stroke-width="1"/><circle cx="7" cy="7" r="1.8" fill="none" stroke="#c0c6d6" stroke-width="1"/></svg><svg class="abs" style="left:1267px;top:530px" width="14" height="14" viewBox="0 0 14 14"><path d="M7 0.8 L8.2 0.8 L8.6 2.6 L10 3.2 L11.5 2.1 L12.4 3 L11.4 4.5 L12 5.9 L13.8 6.3 L13.8 7.7 L12 8.1 L11.4 9.5 L12.4 11 L11.5 11.9 L10 10.8 L8.6 11.4 L8.2 13.2 L5.8 13.2 L5.4 11.4 L4 10.8 L2.5 11.9 L1.6 11 L2.6 9.5 L2 8.1 L0.2 7.7 L0.2 6.3 L2 5.9 L2.6 4.5 L1.6 3 L2.5 2.1 L4 3.2 L5.4 2.6 L5.8 0.8Z" fill="none" stroke="#c0c6d6" stroke-width="1"/><circle cx="7" cy="7" r="1.8" fill="none" stroke="#c0c6d6" stroke-width="1"/></svg><div class="abs" style="left:884px;top:319px;width:28px;height:28px;background:#b3b9e6"></div><svg class="abs" style="left:887px;top:324px" width="22" height="18" viewBox="0 0 22 18">
<path d="M1 5 Q1 4 2 4 L6 4 L8 1.5 L14 1.5 L16 4 L20 4 Q21 4 21 5 L21 16 Q21 17 20 17 L2 17 Q1 17 1 16Z" fill="#2a2a2a"/>
<circle cx="11" cy="10.5" r="5" fill="#555" stroke="#999" stroke-width="1"/>
<circle cx="11" cy="10.5" r="3" fill="#1a1a1a"/>
<circle cx="10" cy="9.5" r="1" fill="#888"/>
</svg><svg class="abs" style="left:920px;top:322px" width="23" height="22" viewBox="0 0 23 22">
<circle cx="6.5" cy="16" r="5.5" fill="#2a4ad0"/>
<circle cx="13" cy="9" r="4" fill="#3a60e0"/>
<circle cx="18.5" cy="4" r="3.2" fill="#4a78f0"/>
<circle cx="5" cy="14" r="2" fill="#a0c0ff"/>
<circle cx="12" cy="7.5" r="1.5" fill="#b0d0ff"/>
<circle cx="18" cy="3" r="1.2" fill="#c0e0ff"/>
</svg><svg class="abs" style="left:950px;top:322px" width="24" height="22" viewBox="0 0 24 22">
<rect x="0.5" y="0.5" width="23" height="21" fill="#8c8c8c" stroke="#555"/>
<rect x="2.5" y="2.5" width="19" height="17" fill="#8fc8f0"/>
<rect x="4" y="4" width="16" height="14" fill="#fff" stroke="#d03020" stroke-width="1.2"/>
</svg><div class="abs" style="left:901px;top:374px;width:356px;height:1px;background:#dde1ea"></div><div class="t" style="left:905.5px;top:357.75px;font-size:12px;color:#6e6e6e;">Width</div><div class="abs" style="left:1070px;top:355px;width:187px;height:19px;background:#fff"></div><div class="t" style="left:1074px;top:357.75px;font-size:12px;color:#1e1e1e;">871</div><div class="abs" style="left:901px;top:395px;width:356px;height:1px;background:#dde1ea"></div><div class="t" style="left:905.5px;top:378.75px;font-size:12px;color:#6e6e6e;">Height</div><div class="abs" style="left:1070px;top:376px;width:187px;height:19px;background:#fff"></div><div class="t" style="left:1074px;top:378.75px;font-size:12px;color:#1e1e1e;">604</div><div class="abs" style="left:901px;top:416px;width:356px;height:1px;background:#dde1ea"></div><div class="t" style="left:905.5px;top:399.75px;font-size:12px;color:#1e1e1e;">Projection</div><div class="abs" style="left:1070px;top:397px;width:187px;height:19px;background:#fff"></div><div class="t" style="left:1073px;top:399.75px;font-size:12px;color:#1e1e1e;">Perspective</div><div class="abs" style="left:901px;top:437px;width:356px;height:1px;background:#dde1ea"></div><div class="t" style="left:905.5px;top:420.75px;font-size:12px;color:#1e1e1e;">Locked</div><div class="abs" style="left:1069px;top:353px;width:1px;height:84px;background:#dde1ea"></div><svg class="abs" style="left:1237px;top:397px" width="19" height="19" viewBox="0 0 19 19">
<rect x="0.5" y="0.5" width="18" height="18" fill="#e6e6e6" stroke="#b4b4b4"/>
<path d="M5.5 7.5 L9.5 11.5 L13.5 7.5" stroke="#444" fill="none" stroke-width="1.1"/>
</svg><div class="abs" style="left:1072px;top:421px;width:11px;height:11px;border:1px solid #333;background:#fff"></div><div class="t" style="left:886px;top:445px;font-size:12px;color:#2a2a2a;font-size:13px;top:444px">Camera</div><div class="abs" style="left:886px;top:463px;width:371px;height:1px;background:#dde1ea"></div><div class="abs" style="left:878px;top:464px;width:386px;height:35px;overflow:hidden"><div class="abs" style="left:23px;top:20px;width:356px;height:1px;background:#dde1ea"></div><div class="abs" style="left:192px;top:1px;width:187px;height:19px;background:#fff"></div><div class="t" style="left:27.5px;top:4.25px;font-size:12px;color:#1e1e1e;">Lens Length(mm)</div><div class="t" style="left:196px;top:4.25px;font-size:12px;color:#1e1e1e;">50.0</div><div class="abs" style="left:23px;top:41px;width:356px;height:1px;background:#dde1ea"></div><div class="abs" style="left:192px;top:22px;width:187px;height:19px;background:#fff"></div><div class="t" style="left:27.5px;top:25.25px;font-size:12px;color:#1e1e1e;">Rotation</div><div class="t" style="left:196px;top:25.25px;font-size:12px;color:#1e1e1e;">0.0</div></div><div class="abs" style="left:1069px;top:463px;width:1px;height:36px;background:#dde1ea"></div><div class="abs" style="left:878px;top:499px;width:402px;height:4px;background:#eaebef"></div><div class="abs" style="left:877px;top:499px;width:403px;height:1px;background:#c3cad9"></div><div class="abs" style="left:1264px;top:351px;width:16px;height:148px;background:#e9eaef"></div><div class="abs" style="left:1264px;top:379px;width:16px;height:33px;background:#cdcdcd"></div><svg class="abs" style="left:1267px;top:356px" width="10" height="6"><path d="M1 5 L5 1 L9 5" stroke="#666" fill="none"/></svg><svg class="abs" style="left:1267px;top:487px" width="10" height="6"><path d="M1 1 L5 5 L9 1" stroke="#666" fill="none"/></svg><div class="t" style="left:880px;top:508.5px;font-size:12px;color:#2a2a2a;font-size:11px">Layers</div><div class="abs" style="left:917px;top:514px;width:363px;height:1px;background:#d3d8e3"></div><div class="abs" style="left:917px;top:516px;width:363px;height:1px;background:#d3d8e3"></div><svg class="abs" style="left:870px;top:520px" width="410" height="390" viewBox="870 520 410 390">
<path d="M877.5 907.5 L877.5 524.5 L920.5 524.5 L920.5 545.5 L1280 545.5" stroke="#c3cad9" fill="none"/>
<path d="M877 907.5 L1280 907.5" stroke="#c3cad9"/>
<path d="M877 579.5 L1280 579.5" stroke="#c3cad9"/>
</svg><svg class="abs" style="left:892px;top:528px" width="17" height="17" viewBox="652 230 17.5 18.5">
<path d="M652.2 230.2 L669.6 234.3 L669.6 243.5 L659.6 248.4 L652.2 239.6Z" fill="#2848b0" stroke="#111" stroke-width="0.9"/>
<path d="M652.8 231 L669 235 L669 240 L659.6 245 L652.8 237Z" fill="#d0d0d0"/>
<path d="M652.8 231 L669 235 L669 238.5 L659.6 243 L652.8 235.5Z" fill="#e03818"/>
<path d="M652.8 231 L669 235 L669 236.5 L659.6 240 L653 233Z" fill="#e86818"/>
<path d="M652.8 235.5 L659.6 243.5 L659.6 247 L652.8 239Z" fill="#f4f4ff"/>
</svg><svg class="abs" style="left:937px;top:530px" width="15" height="12" viewBox="0 0 15 12">
<path d="M0.5 1 L5 1 L6 2.5 L12 2.5 L12 5 L3 5 L0.5 11 Z" fill="#e8b830" stroke="#333" stroke-width="0.8"/>
<path d="M3 5 L14.5 5 L12 11 L0.5 11 Z" fill="#f8d860" stroke="#333" stroke-width="0.8"/>
</svg><svg class="abs" style="left:982px;top:528px" width="14" height="16" viewBox="0 0 14 16">
<path d="M2 14 L9 4 L12 6 L5 15 Z" fill="#e0e0e0" stroke="#555" stroke-width="0.8"/>
<path d="M8 5 L11 1 L13 2.5 L10.5 6.5Z" fill="#e05020"/>
</svg><svg class="abs" style="left:1026px;top:528px" width="14" height="16" viewBox="0 0 14 16">
<path d="M7 1 Q2.5 1.5 2.5 7 L2.5 11 L0.5 13 L13.5 13 L11.5 11 L11.5 7 Q11.5 1.5 7 1Z" fill="#2060d0" stroke="#102a70" stroke-width="0.8"/>
<circle cx="7" cy="14.5" r="1.3" fill="#102a70"/>
</svg><svg class="abs" style="left:1070px;top:528px" width="15" height="15" viewBox="0 0 15 15">
<rect x="0.5" y="0.5" width="14" height="14" fill="#fff" stroke="#3060b0"/>
<rect x="0.5" y="0.5" width="14" height="3" fill="#3060b0"/>
<rect x="2" y="5" width="11" height="8" fill="#3a78d8"/>
<text x="7.5" y="12" font-size="8" fill="#fff" text-anchor="middle" font-family="Liberation Sans" font-weight="bold">?</text>
</svg><svg class="abs" style="left:1113px;top:527px" width="16" height="16" viewBox="0 0 16 16">
<circle cx="7" cy="9.5" r="6" fill="#2a58d0" stroke="#1a2a60" stroke-width="0.8"/>
<circle cx="5" cy="7.5" r="2" fill="#a8c8ff"/>
<path d="M10 4 L13 1.5" stroke="#333" stroke-width="1.5"/>
<circle cx="13.5" cy="1.5" r="1.2" fill="#fff" stroke="#333" stroke-width="0.5"/>
</svg><svg class="abs" style="left:888px;top:556px" width="220" height="17" viewBox="0 0 220 17">
<path d="M1.5 1.5 L8 1.5 L11.5 5 L11.5 15.5 L1.5 15.5Z" fill="#f0f0f0" stroke="#222"/>
<path d="M22.5 1.5 L28 1.5 L28 11.5 L22.5 11.5Z" fill="#f0f0f0" stroke="#222"/>
<path d="M26.5 5.5 L31 5.5 L33.5 8 L33.5 15.5 L26.5 15.5Z" fill="#f0f0f0" stroke="#222"/>
<path d="M46 3 L57 14 M57 3 L46 14" stroke="#d02020" stroke-width="2.4"/>
<path d="M68 12 L75 5 L82 12Z" fill="#c8c8c8"/>
<path d="M90 5 L104 5 L97 12Z" fill="#7088e8" stroke="#3040a0" stroke-width="0.8"/>
<path d="M115 8.5 L121 2 L121 15Z" fill="#c01830" stroke="#601020" stroke-width="0.6"/>
<path d="M136 2 L148 2 L144 8 L144 15 L140 15 L140 8Z" fill="#3080d8" stroke="#153060" stroke-width="0.8"/>
<path d="M146 14 L149 11 L149 14Z" fill="#222"/>
<path d="M160.5 1.5 L166 1.5 L169.5 5 L169.5 15.5 L160.5 15.5Z" fill="#d8d8d8" stroke="#aaa"/>
<path d="M183 15 L192 5" stroke="#1a2a70" stroke-width="2.4"/>
<path d="M187 2 L195 2 L197 5 L192 9 L189 6Z" fill="#222"/>
<path d="M194 14 L197 11 L197 14Z" fill="#222"/>
<circle cx="210.5" cy="8.5" r="7" fill="#2a6ad8" stroke="#1a3a90" stroke-width="0.6"/>
<text x="210.5" y="12.5" font-size="11" fill="#fff" text-anchor="middle" font-family="Liberation Sans" font-weight="bold">?</text>
</svg><div class="abs" style="left:878px;top:580px;width:400px;height:311px;background:#fff"></div><div class="abs" style="left:983px;top:581px;width:1px;height:22px;background:#e4e6ec"></div><div class="abs" style="left:1000px;top:581px;width:1px;height:22px;background:#e4e6ec"></div><div class="abs" style="left:1017px;top:581px;width:1px;height:22px;background:#e4e6ec"></div><div class="abs" style="left:1034px;top:581px;width:1px;height:22px;background:#e4e6ec"></div><div class="abs" style="left:1051px;top:581px;width:1px;height:22px;background:#e4e6ec"></div><div class="abs" style="left:1131px;top:581px;width:1px;height:22px;background:#e4e6ec"></div><div class="abs" style="left:1211px;top:581px;width:1px;height:22px;background:#e4e6ec"></div><div class="abs" style="left:1228px;top:581px;width:1px;height:22px;background:#e4e6ec"></div><div class="t" style="left:883px;top:585px;font-size:12px;color:#1e1e1e;">Layer</div><div class="t" style="left:1057px;top:585px;font-size:12px;color:#1e1e1e;">Material</div><div class="t" style="left:1137px;top:585px;font-size:12px;color:#1e1e1e;">Linetype</div><div class="t" style="left:1233.5px;top:585px;font-size:12px;color:#1e1e1e;width:44px;overflow:hidden">Print Wi</div><div class="abs" style="left:1278px;top:580px;width:2px;height:311px;background:#eaebef"></div><div class="abs" style="left:878px;top:622px;width:400px;height:1px;background:#eef0f5"></div><div class="t" style="left:901px;top:607px;font-size:12px;color:#1e1e1e;">Default</div><svg class="abs" style="left:1004px;top:607px" width="10" height="14" viewBox="0 0 10 14"><path d="M4.5 0.8 Q0.8 0.8 0.8 4.8 Q0.8 7.3 2.8 8.8 L2.8 11.2 L6.2 11.2 L6.2 8.8 Q8.2 7.3 8.2 4.8 Q8.2 0.8 4.5 0.8Z" fill="#f8e488" stroke="#5a4a20" stroke-width="0.9"/><path d="M3 12.3 L6 12.3" stroke="#5a4a20" stroke-width="1.2"/></svg><svg class="abs" style="left:1020px;top:607px" width="12" height="14" viewBox="0 0 12 14"><path d="M6 6 L6 3.5 Q6 1 8.5 1 Q11 1 11 3.5 L11 5" stroke="#222" stroke-width="1.1" fill="none"/><rect x="1" y="6" width="8" height="7" fill="#f0c850" stroke="#222" stroke-width="1"/></svg><div class="abs" style="left:1037px;top:607px;width:12px;height:12px;box-sizing:border-box;border:1px solid #333;background:#000"></div><div class="abs" style="left:1054px;top:606px;width:15px;height:15px;border-radius:50%;background:#f7f7f7"></div><div class="t" style="left:1135.5px;top:607px;font-size:12px;color:#1e1e1e;">Continuous</div><svg class="abs" style="left:1213px;top:606px" width="15" height="15" viewBox="0 0 15 15"><path d="M7.5 1 L14 7.5 L7.5 14 L1 7.5Z" fill="#000" stroke="#222" stroke-width="0.9"/></svg><div class="t" style="left:1232.5px;top:607px;font-size:12px;color:#1e1e1e;">Default</div><div class="abs" style="left:878px;top:641px;width:400px;height:1px;background:#eef0f5"></div><div class="t" style="left:901px;top:626px;font-size:12px;color:#1e1e1e;">2D</div><svg class="abs" style="left:884px;top:629px" width="10" height="7"><path d="M1 1 L5 5 L9 1" stroke="#333" stroke-width="1.7" fill="none"/></svg><svg class="abs" style="left:1004px;top:626px" width="10" height="14" viewBox="0 0 10 14"><path d="M4.5 0.8 Q0.8 0.8 0.8 4.8 Q0.8 7.3 2.8 8.8 L2.8 11.2 L6.2 11.2 L6.2 8.8 Q8.2 7.3 8.2 4.8 Q8.2 0.8 4.5 0.8Z" fill="#f8e488" stroke="#5a4a20" stroke-width="0.9"/><path d="M3 12.3 L6 12.3" stroke="#5a4a20" stroke-width="1.2"/></svg><svg class="abs" style="left:1020px;top:626px" width="12" height="14" viewBox="0 0 12 14"><path d="M6 6 L6 3.5 Q6 1 8.5 1 Q11 1 11 3.5 L11 5" stroke="#222" stroke-width="1.1" fill="none"/><rect x="1" y="6" width="8" height="7" fill="#f0c850" stroke="#222" stroke-width="1"/></svg><div class="abs" style="left:1037px;top:626px;width:12px;height:12px;box-sizing:border-box;border:1px solid #333;background:#000"></div><div class="abs" style="left:1054px;top:625px;width:15px;height:15px;border-radius:50%;background:#f7f7f7"></div><div class="t" style="left:1135.5px;top:626px;font-size:12px;color:#1e1e1e;">Continuous</div><svg class="abs" style="left:1213px;top:625px" width="15" height="15" viewBox="0 0 15 15"><path d="M7.5 1 L14 7.5 L7.5 14 L1 7.5Z" fill="#000" stroke="#222" stroke-width="0.9"/></svg><div class="t" style="left:1232.5px;top:626px;font-size:12px;color:#1e1e1e;">Default</div><div class="abs" style="left:878px;top:642px;width:400px;height:19px;background:#7f9bea"></div><div class="t" style="left:917px;top:645px;font-size:12px;color:#1e1e1e;">Picture</div><svg class="abs" style="left:1004px;top:645px" width="10" height="14" viewBox="0 0 10 14"><path d="M4.5 0.8 Q0.8 0.8 0.8 4.8 Q0.8 7.3 2.8 8.8 L2.8 11.2 L6.2 11.2 L6.2 8.8 Q8.2 7.3 8.2 4.8 Q8.2 0.8 4.5 0.8Z" fill="#f8e488" stroke="#5a4a20" stroke-width="0.9"/><path d="M3 12.3 L6 12.3" stroke="#5a4a20" stroke-width="1.2"/></svg><svg class="abs" style="left:1020px;top:645px" width="12" height="14" viewBox="0 0 12 14"><path d="M2.5 6 L2.5 3.5 Q2.5 1 5.5 1 Q8.5 1 8.5 3.5 L8.5 6" stroke="#222" stroke-width="1.1" fill="none"/><rect x="1" y="6" width="9" height="7" fill="#70a8e8" stroke="#fff" stroke-width="0.8"/><rect x="1.5" y="6.5" width="8" height="6" fill="none" stroke="#222" stroke-width="0.8"/></svg><div class="abs" style="left:1037px;top:645px;width:12px;height:12px;box-sizing:border-box;border:1px solid #fff;background:#000"></div><div class="abs" style="left:1039px;top:647px;width:8px;height:8px;background:#000"></div><div class="abs" style="left:1054px;top:644px;width:15px;height:15px;border-radius:50%;background:#ffffff"></div><div class="t" style="left:1135.5px;top:645px;font-size:12px;color:#1e1e1e;">Continuous</div><svg class="abs" style="left:1213px;top:644px" width="15" height="15" viewBox="0 0 15 15"><path d="M7.5 1 L14 7.5 L7.5 14 L1 7.5Z" fill="#000" stroke="#fff" stroke-width="1.2"/></svg><div class="t" style="left:1232.5px;top:645px;font-size:12px;color:#1e1e1e;">Default</div><div class="abs" style="left:878px;top:679px;width:400px;height:1px;background:#eef0f5"></div><div class="t" style="left:917px;top:664px;font-size:12px;color:#1e1e1e;">Grid</div><svg class="abs" style="left:1004px;top:664px" width="10" height="14" viewBox="0 0 10 14"><path d="M4.5 0.8 Q0.8 0.8 0.8 4.8 Q0.8 7.3 2.8 8.8 L2.8 11.2 L6.2 11.2 L6.2 8.8 Q8.2 7.3 8.2 4.8 Q8.2 0.8 4.5 0.8Z" fill="#f8e488" stroke="#5a4a20" stroke-width="0.9"/><path d="M3 12.3 L6 12.3" stroke="#5a4a20" stroke-width="1.2"/></svg><svg class="abs" style="left:1020px;top:664px" width="12" height="14" viewBox="0 0 12 14"><path d="M6 6 L6 3.5 Q6 1 8.5 1 Q11 1 11 3.5 L11 5" stroke="#222" stroke-width="1.1" fill="none"/><rect x="1" y="6" width="8" height="7" fill="#f0c850" stroke="#222" stroke-width="1"/></svg><div class="abs" style="left:1037px;top:664px;width:12px;height:12px;box-sizing:border-box;border:1px solid #333;background:#f8c8f8"></div><div class="abs" style="left:1054px;top:663px;width:15px;height:15px;border-radius:50%;background:#f7f7f7"></div><div class="t" style="left:1135.5px;top:664px;font-size:12px;color:#1e1e1e;">Continuous</div><svg class="abs" style="left:1213px;top:663px" width="15" height="15" viewBox="0 0 15 15"><path d="M7.5 1 L14 7.5 L7.5 14 L1 7.5Z" fill="#f8c8f8" stroke="#222" stroke-width="0.9"/></svg><div class="t" style="left:1232.5px;top:664px;font-size:12px;color:#1e1e1e;">Default</div><div class="abs" style="left:878px;top:698px;width:400px;height:1px;background:#eef0f5"></div><div class="t" style="left:917px;top:683px;font-size:12px;color:#1e1e1e;">Wall</div><svg class="abs" style="left:1004px;top:683px" width="10" height="14" viewBox="0 0 10 14"><path d="M4.5 0.8 Q0.8 0.8 0.8 4.8 Q0.8 7.3 2.8 8.8 L2.8 11.2 L6.2 11.2 L6.2 8.8 Q8.2 7.3 8.2 4.8 Q8.2 0.8 4.5 0.8Z" fill="#f8e488" stroke="#5a4a20" stroke-width="0.9"/><path d="M3 12.3 L6 12.3" stroke="#5a4a20" stroke-width="1.2"/></svg><svg class="abs" style="left:1020px;top:683px" width="12" height="14" viewBox="0 0 12 14"><path d="M6 6 L6 3.5 Q6 1 8.5 1 Q11 1 11 3.5 L11 5" stroke="#222" stroke-width="1.1" fill="none"/><rect x="1" y="6" width="8" height="7" fill="#f0c850" stroke="#222" stroke-width="1"/></svg><div class="abs" style="left:1037px;top:683px;width:12px;height:12px;box-sizing:border-box;border:1px solid #333;background:#c0302a"></div><div class="abs" style="left:1054px;top:682px;width:15px;height:15px;border-radius:50%;background:#f7f7f7"></div><div class="t" style="left:1135.5px;top:683px;font-size:12px;color:#1e1e1e;">Continuous</div><svg class="abs" style="left:1213px;top:682px" width="15" height="15" viewBox="0 0 15 15"><path d="M7.5 1 L14 7.5 L7.5 14 L1 7.5Z" fill="#c0302a" stroke="#222" stroke-width="0.9"/></svg><div class="t" style="left:1232.5px;top:683px;font-size:12px;color:#1e1e1e;">Default</div><div class="abs" style="left:878px;top:717px;width:400px;height:1px;background:#eef0f5"></div><div class="t" style="left:917px;top:702px;font-size:12px;color:#1e1e1e;">Terrace</div><svg class="abs" style="left:1004px;top:702px" width="10" height="14" viewBox="0 0 10 14"><path d="M4.5 0.8 Q0.8 0.8 0.8 4.8 Q0.8 7.3 2.8 8.8 L2.8 11.2 L6.2 11.2 L6.2 8.8 Q8.2 7.3 8.2 4.8 Q8.2 0.8 4.5 0.8Z" fill="#f8e488" stroke="#5a4a20" stroke-width="0.9"/><path d="M3 12.3 L6 12.3" stroke="#5a4a20" stroke-width="1.2"/></svg><svg class="abs" style="left:1020px;top:702px" width="12" height="14" viewBox="0 0 12 14"><path d="M6 6 L6 3.5 Q6 1 8.5 1 Q11 1 11 3.5 L11 5" stroke="#222" stroke-width="1.1" fill="none"/><rect x="1" y="6" width="8" height="7" fill="#f0c850" stroke="#222" stroke-width="1"/></svg><div class="abs" style="left:1037px;top:702px;width:12px;height:12px;box-sizing:border-box;border:1px solid #333;background:#38a878"></div><div class="abs" style="left:1054px;top:701px;width:15px;height:15px;border-radius:50%;background:#f7f7f7"></div><div class="t" style="left:1135.5px;top:702px;font-size:12px;color:#1e1e1e;">Continuous</div><svg class="abs" style="left:1213px;top:701px" width="15" height="15" viewBox="0 0 15 15"><path d="M7.5 1 L14 7.5 L7.5 14 L1 7.5Z" fill="#38a878" stroke="#222" stroke-width="0.9"/></svg><div class="t" style="left:1232.5px;top:702px;font-size:12px;color:#1e1e1e;">Default</div><div class="abs" style="left:878px;top:736px;width:400px;height:1px;background:#eef0f5"></div><div class="t" style="left:901px;top:721px;font-size:12px;color:#1e1e1e;">3D</div><svg class="abs" style="left:884px;top:724px" width="10" height="7"><path d="M1 1 L5 5 L9 1" stroke="#333" stroke-width="1.7" fill="none"/></svg><svg class="abs" style="left:1004px;top:721px" width="10" height="14" viewBox="0 0 10 14"><path d="M4.5 0.8 Q0.8 0.8 0.8 4.8 Q0.8 7.3 2.8 8.8 L2.8 11.2 L6.2 11.2 L6.2 8.8 Q8.2 7.3 8.2 4.8 Q8.2 0.8 4.5 0.8Z" fill="#f8e488" stroke="#5a4a20" stroke-width="0.9"/><path d="M3 12.3 L6 12.3" stroke="#5a4a20" stroke-width="1.2"/></svg><svg class="abs" style="left:1020px;top:721px" width="12" height="14" viewBox="0 0 12 14"><path d="M6 6 L6 3.5 Q6 1 8.5 1 Q11 1 11 3.5 L11 5" stroke="#222" stroke-width="1.1" fill="none"/><rect x="1" y="6" width="8" height="7" fill="#f0c850" stroke="#222" stroke-width="1"/></svg><div class="abs" style="left:1037px;top:721px;width:12px;height:12px;box-sizing:border-box;border:1px solid #333;background:#000"></div><div class="abs" style="left:1054px;top:720px;width:15px;height:15px;border-radius:50%;background:#f7f7f7"></div><div class="t" style="left:1135.5px;top:721px;font-size:12px;color:#1e1e1e;">Continuous</div><svg class="abs" style="left:1213px;top:720px" width="15" height="15" viewBox="0 0 15 15"><path d="M7.5 1 L14 7.5 L7.5 14 L1 7.5Z" fill="#000" stroke="#222" stroke-width="0.9"/></svg><div class="t" style="left:1232.5px;top:721px;font-size:12px;color:#1e1e1e;">Default</div><div class="abs" style="left:878px;top:755px;width:400px;height:1px;background:#eef0f5"></div><div class="t" style="left:917px;top:740px;font-size:12px;font-weight:bold;color:#1e1e1e;font-size:11.5px">Shell</div><svg class="abs" style="left:985px;top:741px" width="14" height="11"><path d="M1.5 6 L5 9.5 L12.5 1.5" stroke="#111" stroke-width="1.6" fill="none"/></svg><div class="abs" style="left:1037px;top:740px;width:12px;height:12px;box-sizing:border-box;border:1px solid #333;background:#c8c8f8"></div><div class="abs" style="left:1054px;top:739px;width:15px;height:15px;border-radius:50%;background:#f7f7f7"></div><div class="t" style="left:1135.5px;top:740px;font-size:12px;font-weight:bold;color:#1e1e1e;font-size:11.2px">Continuous</div><svg class="abs" style="left:1213px;top:739px" width="15" height="15" viewBox="0 0 15 15"><path d="M7.5 1 L14 7.5 L7.5 14 L1 7.5Z" fill="#c8c8f8" stroke="#222" stroke-width="0.9"/></svg><div class="t" style="left:1232.5px;top:740px;font-size:12px;font-weight:bold;color:#1e1e1e;font-size:11.5px">Default</div><div class="abs" style="left:878px;top:891px;width:402px;height:16px;background:#f0f0f0"></div><div class="abs" style="left:895px;top:892px;width:339px;height:14px;background:#cdcdcd"></div><svg class="abs" style="left:882px;top:894px" width="8" height="10"><path d="M6 1 L2 5 L6 9" stroke="#444" stroke-width="1.4" fill="none"/></svg><svg class="abs" style="left:1265px;top:894px" width="8" height="10"><path d="M2 1 L6 5 L2 9" stroke="#444" stroke-width="1.4" fill="none"/></svg>
</body></html>
